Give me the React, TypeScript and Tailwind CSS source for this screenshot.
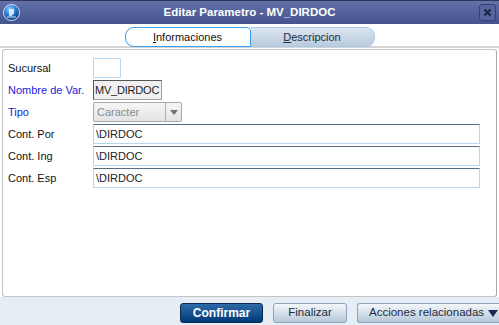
const font = { fontFamily: '"Liberation Sans", Arial, sans-serif' };

function TitleIcon() {
  return (
    <svg width="17" height="17" viewBox="0 0 17 17">
      <defs>
        <radialGradient id="g1" cx="40%" cy="30%" r="70%">
          <stop offset="0%" stopColor="#8fd0ff" />
          <stop offset="60%" stopColor="#1f6fc0" />
          <stop offset="100%" stopColor="#0c3c80" />
        </radialGradient>
      </defs>
      <circle cx="8.5" cy="8.5" r="8" fill="url(#g1)" stroke="#d8e4f4" strokeWidth="1" />
      <path d="M6 5h5v4.5l-2.5 2.5H6z" fill="#e8f2ff" opacity="0.85" />
      <path d="M4 13h9" stroke="#cfe6ff" strokeWidth="1" />
    </svg>
  );
}

function TextRow({ label, value }: { label: string; value: string }) {
  return (
    <div className="flex h-[20px] items-center">
      <div className="w-[85px] whitespace-nowrap text-[11px] text-[#111]">{label}</div>
      <div className="flex h-[20px] flex-1 items-center border border-[#b6d6f6] border-t-[#5b6b80] bg-white pl-[2px] text-[11px] text-[#222]">
        {value}
      </div>
    </div>
  );
}

export default function App() {
  return (
    <div className="flex h-[325px] w-[499px] flex-col overflow-hidden bg-white" style={font}>
      <div className="flex h-[24px] items-center border-t border-[#2c3560] bg-gradient-to-b from-[#6271a8] to-[#44538d] px-[3px]">
        <TitleIcon />
        <div className="flex-1 text-center text-[11.5px] font-bold text-white">Editar Parametro - MV_DIRDOC</div>
        <div className="flex h-[17px] w-[17px] items-center justify-center rounded-[3px] border border-[#33406e] bg-[#5664a0]">
          <svg width="9" height="9" viewBox="0 0 9 9">
            <path d="M1.5 1.5l6 6M7.5 1.5l-6 6" stroke="#1c2440" strokeWidth="2" />
          </svg>
        </div>
      </div>

      <div className="flex h-[24px] justify-center border-b-2 border-[#d4d4d4] pt-[3px]">
        <div className="flex h-[20px] w-[126px] items-center justify-center rounded-l-[9px] rounded-tr-[4px] border border-[#3a9cf0] bg-white text-[11px] text-[#111]">
          <span><span className="underline">I</span>nformaciones</span>
        </div>
        <div className="flex h-[20px] w-[124px] items-center justify-center rounded-r-[9px] border border-l-0 border-[#a8c8e8] bg-gradient-to-b from-[#dbe5ef] to-[#b9cbdc] text-[11px] text-[#1a2a40]">
          <span><span className="underline">D</span>escripcion</span>
        </div>
      </div>

      <div className="mx-[2px] mt-[1px] flex flex-1 flex-col gap-[2px] rounded-[3px] border border-[#c4c4c4] border-r-[#a8a8a8] pb-2 pl-[5px] pr-[16px] pt-[8px]">
        <div className="flex h-[20px] items-center">
          <div className="w-[85px] text-[11px] text-[#111]">Sucursal</div>
          <div className="h-[20px] w-[28px] border border-[#b6d6f6] bg-white" />
        </div>
        <div className="flex h-[20px] items-center">
          <div className="w-[85px] whitespace-nowrap text-[11px] text-[#2222dd]">Nombre de Var.</div>
          <div className="flex h-[20px] w-[69px] items-center whitespace-nowrap border border-[#555] border-b-[#a0a0a0] border-r-[#a0a0a0] bg-[#f0f0f0] pl-[1px] text-[11px] tracking-[-0.2px] text-[#222]">
            MV_DIRDOC
          </div>
        </div>
        <div className="flex h-[20px] items-center">
          <div className="w-[85px] text-[11px] text-[#2222dd]">Tipo</div>
          <div className="flex h-[20px] w-[89px] items-center rounded-[2px] border border-[#a8a8a8] bg-gradient-to-b from-[#f6f6f6] to-[#e4e4e4]">
            <div className="flex-1 pl-[3px] text-[11px] text-[#8a8a8a]">Caracter</div>
            <div className="flex h-full w-[16px] items-center justify-center border-l border-[#b0b0b0]">
              <svg width="8" height="5" viewBox="0 0 8 5">
                <path d="M0 0h8L4 5z" fill="#707070" />
              </svg>
            </div>
          </div>
        </div>
        <TextRow label="Cont. Por" value="\DIRDOC" />
        <TextRow label="Cont. Ing" value="\DIRDOC" />
        <TextRow label="Cont. Esp" value="\DIRDOC" />
      </div>

      <div className="flex h-[28px] items-start justify-end gap-[10px] bg-[#e6edf5] pt-[6px]">
        <div className="flex h-[20px] w-[83px] items-center justify-center rounded-[3px] border border-[#0b2a52] bg-gradient-to-b from-[#2e6aa8] to-[#003a78] text-[12px] font-bold text-white">
          Confirmar
        </div>
        <div className="flex h-[20px] w-[74px] items-center justify-center rounded-[3px] border border-[#8aa2bc] bg-gradient-to-b from-[#f4f7fa] to-[#b6c8da] text-[11.5px] text-[#1a2a40]">
          Finalizar
        </div>
        <div className="flex h-[20px] w-[142px] items-center justify-between whitespace-nowrap rounded-l-[3px] border border-r-0 border-[#8aa2bc] bg-gradient-to-b from-[#f4f7fa] to-[#b6c8da] pl-[11px] pr-[1px] text-[11.5px] text-[#1a2a40]">
          <span>Acciones relacionadas</span>
          <svg width="10" height="7" viewBox="0 0 10 7">
            <path d="M0 0h10L5 7z" fill="#1a2a50" />
          </svg>
        </div>
      </div>
    </div>
  );
}
